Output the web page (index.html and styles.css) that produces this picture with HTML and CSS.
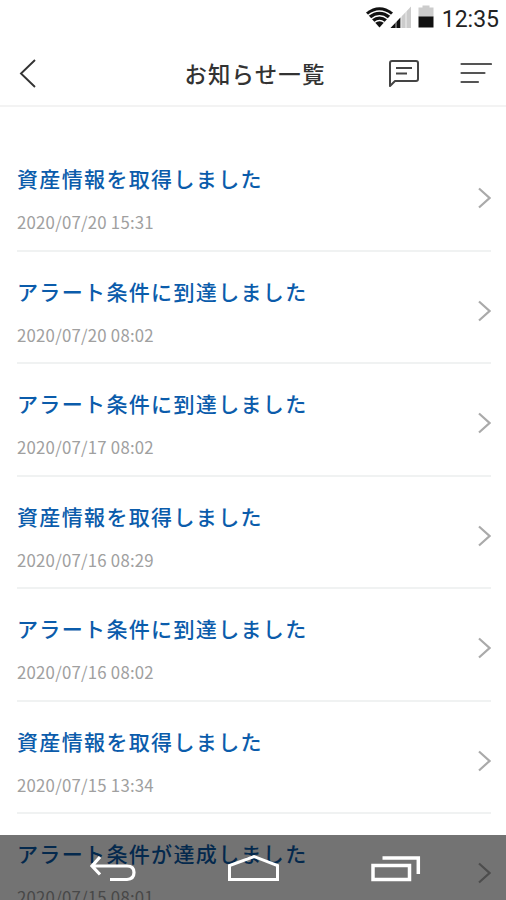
FILE: index.html
```html
<!DOCTYPE html>
<html lang="ja">
<head>
    <meta charset="UTF-8">
    <meta name="viewport" content="width=device-width, initial-scale=1.0">
    <title>お知らせ一覧</title>
    <link rel="stylesheet" href="styles.css">
</head>
<body>

    <div class="status-bar">
        <svg class="status-icons" width="70" height="24" viewBox="0 0 70 24">
            <path d="M1 12.500Q14.500 2 28 12.500L14.500 27.500Z" fill="#111"/>
            <path d="M3 15.500Q14.500 6.500 26 15.500M6.200 19Q14.500 12.500 22.800 19M9.500 22.500Q14.500 18.500 19.500 22.500" fill="none" stroke="#fff" stroke-width="1.300"/>
            <path d="M46 6.500V28H25.500Z" fill="#ccc"/>
            <path d="M35.500 17.500V28H25.500Z" fill="#111"/>
            <path d="M31 18V28M36 14V28M41 9V28" stroke="#fff" stroke-width="0.700"/>
            <path d="M53.500 7.500h4V5.500h7v2h4V17H53.500Z" fill="#ccc"/>
            <path d="M53.500 16.500h15V27.500H53.500Z" fill="#111"/>
        </svg>
        <span class="clock">12:35</span>
    </div>

    <header class="header">
        <svg class="back" width="18" height="30" viewBox="0 0 18 30">
            <path d="M17 2L3 15.500L17 29" fill="none" stroke="#333" stroke-width="1.900"/>
        </svg>
        <h1>お知らせ一覧</h1>
        <div class="actions">
            <svg width="32" height="30" viewBox="0 0 32 30" fill="none" stroke="#444" stroke-width="2">
                <path d="M2 28V5Q2 3 4 3H28Q30 3 30 5V21Q30 23 28 23H7Z" stroke-linejoin="round"/>
                <path d="M8 10h16M8 15.500h11"/>
            </svg>
            <svg width="32" height="30" viewBox="0 0 32 30" fill="none" stroke="#555" stroke-width="2.200" stroke-linecap="round">
                <path d="M1.500 6h29.500M1.500 15h23M1.500 24h16.500"/>
            </svg>
        </div>
    </header>

    <main class="list" id="list"></main>

    <nav class="nav-bar">
        <svg width="48" height="30" viewBox="0 0 48 30" fill="none" stroke="#fff" stroke-width="3.200">
            <path d="M12 3L4 12L12 20.500M4 12H39Q46 12 46 18.500T39 25.500H22"/>
        </svg>
        <svg width="54" height="30" viewBox="0 0 54 30" fill="none" stroke="#fff" stroke-width="3">
            <path d="M2.500 25.500V11.500L27 2.500L50.500 11.500V25.500Z"/>
        </svg>
        <svg width="50" height="30" viewBox="0 0 50 30" fill="none" stroke="#fff" stroke-width="3.500">
            <path d="M2 11.500H38.500V25.500H2ZM11.500 4H47.300V20"/>
        </svg>
    </nav>

    <script>
        const notices = [
            ["資産情報を取得しました", "2020/07/20 15:31"],
            ["アラート条件に到達しました", "2020/07/20 08:02"],
            ["アラート条件に到達しました", "2020/07/17 08:02"],
            ["資産情報を取得しました", "2020/07/16 08:29"],
            ["アラート条件に到達しました", "2020/07/16 08:02"],
            ["資産情報を取得しました", "2020/07/15 13:34"],
            ["アラート条件が達成しました", "2020/07/15 08:01"]
        ];

        document.getElementById("list").innerHTML = notices.map(([title, date]) => `
            <a class="item">
                <div>
                    <h2>${title}</h2>
                    <time>${date}</time>
                </div>
                <svg width="14" height="22" viewBox="0 0 14 22">
                    <path d="M2 1.500L12.500 11L2 20.500" fill="none" stroke="#aaa" stroke-width="2.200"/>
                </svg>
            </a>`).join("");
    </script>

</body>
</html>
```
FILE: styles.css
```css
* {
    box-sizing: border-box;
}

body {
    margin: 0;
    height: 900px;
    overflow: hidden;
    background: #fff;
    font-family: "Noto Sans CJK JP", sans-serif;
    position: relative;
}

h1,
h2 {
    margin: 0;
    font-weight: 500;
}

svg {
    display: block;
    flex: none;
}

.status-bar {
    display: flex;
    justify-content: flex-end;
    height: 40px;
    padding-right: 7px;
}

.status-icons {
    width: 70px;
    height: 24px;
    margin-right: 7px;
    overflow: visible;
}

.clock {
    font-family: Roboto, sans-serif;
    font-size: 23px;
    line-height: 39px;
    color: #222;
}

.header {
    display: grid;
    grid-template-columns: 120px 1fr 120px;
    align-items: center;
    height: 67px;
    border-bottom: 2px solid #f3f3f3;
    padding: 0 14px 0 18px;
}

.header h1 {
    font-size: 22.4px;
    letter-spacing: 1.2px;
    line-height: 34px;
    text-align: center;
    color: #333;
}

.actions {
    display: flex;
    justify-content: flex-end;
    gap: 40px;
}

.list {
    padding: 32px 15px 0 17px;
}

.item {
    display: flex;
    justify-content: space-between;
    height: 112.5px;
    padding-top: 22px;
    border-bottom: 2px solid #f0f2f2;
}

.item h2 {
    font-size: 21px;
    letter-spacing: 1.35px;
    line-height: 34px;
    color: #0b5cab;
}

.item time {
    display: block;
    margin-top: 14px;
    font-size: 16.8px;
    letter-spacing: 0.22px;
    line-height: 26px;
    color: #a0a0a0;
}

.item svg {
    margin-top: 26px;
}

.nav-bar {
    position: absolute;
    left: 0;
    right: 0;
    bottom: 0;
    height: 65px;
    padding: 19px 85px 0 88px;
    display: flex;
    justify-content: space-between;
    background: rgba(0, 0, 0, 0.55);
}
```
